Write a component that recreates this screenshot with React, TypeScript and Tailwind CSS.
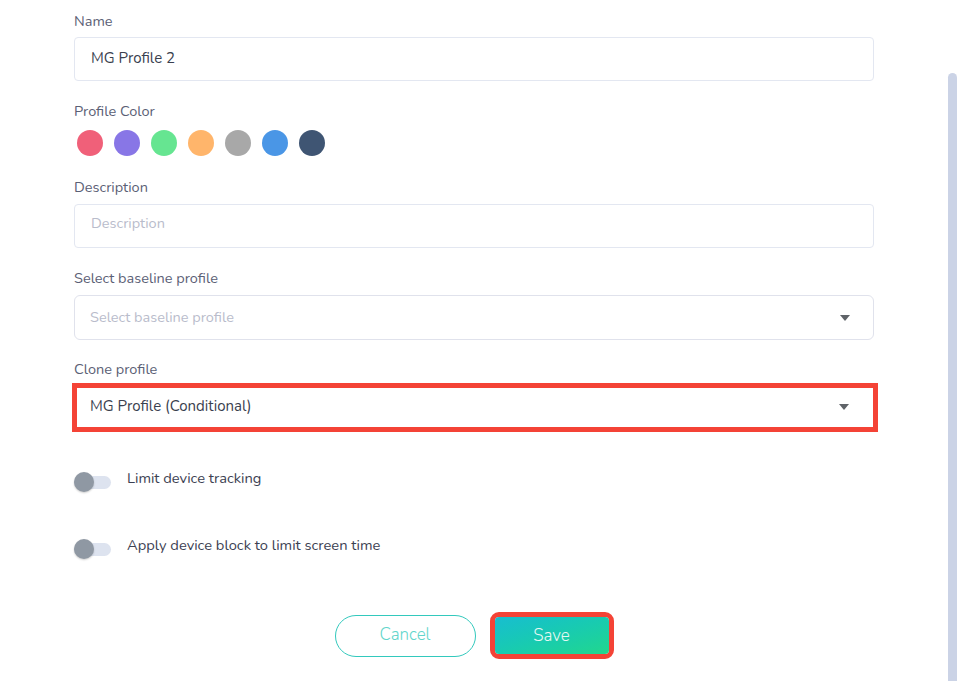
const colors = ["#f06079", "#8876e6", "#66e591", "#ffb56b", "#a8a8a8", "#4a96e6", "#3f5573"];

function Caret() {
  return (
    <svg width="10" height="6" viewBox="0 0 10 6" aria-hidden="true">
      <path d="M0 0h10L5 6z" fill="#5f6368" />
    </svg>
  );
}

function Toggle({ label }: { label: string }) {
  return (
    <div className="flex h-[20px] items-center">
      <div className="relative h-[20px] w-[37px] shrink-0">
        <div className="absolute left-0 top-[4px] h-[13px] w-[37px] rounded-full bg-[#dde3ef]" />
        <div className="absolute left-0 top-0 h-[20px] w-[20px] rounded-full bg-[#8f98a3] shadow-[0_1px_2px_rgba(0,0,0,0.2)]" />
      </div>
      <span className="-mt-[8px] ml-[16px] text-[14.7px] text-[#3c4152]">{label}</span>
    </div>
  );
}

export default function App() {
  return (
    <div
      className="flex h-[681px] w-[957px] overflow-hidden bg-white"
      style={{ fontFamily: "Nunito, Lato, 'Noto Sans', sans-serif" }}
    >
      <div className="flex-1 pl-[74px] pr-[74px] pt-[11px]">
        <div className="w-[800px]">
          {/* Name */}
          <div className="h-[20px] text-[14.5px] leading-[20px] text-[#5b6075]">Name</div>
          <div className="mt-[6px] flex h-[44px] items-center rounded-[4px] border border-[#e3e7f1] px-[16px] pb-[1px] text-[15px] text-[#3a3f4f]">
            MG Profile 2
          </div>

          {/* Profile color */}
          <div className="mt-[20px] h-[20px] text-[14.5px] leading-[20px] text-[#5b6075]">Profile Color</div>
          <div className="mt-[9px] flex gap-[11px] pl-[3px]">
            {colors.map((c) => (
              <div key={c} className="h-[26px] w-[26px] rounded-full" style={{ backgroundColor: c }} />
            ))}
          </div>

          {/* Description */}
          <div className="mt-[21px] h-[20px] text-[14.5px] leading-[20px] text-[#5b6075]">Description</div>
          <div className="mt-[7px] flex h-[44px] items-center rounded-[4px] border border-[#e3e7f1] px-[16px] pb-[5px] text-[14.5px] text-[#b9bccb]">
            Description
          </div>

          {/* Baseline */}
          <div className="mt-[20px] h-[20px] text-[14.5px] leading-[20px] text-[#5b6075]">Select baseline profile</div>
          <div className="mt-[7px] flex h-[45px] items-center justify-between rounded-[6px] border border-[#e0e2ec] pl-[15px] pr-[23px] text-[14.5px] text-[#b9bccb]">
            <span>Select baseline profile</span>
            <Caret />
          </div>

          {/* Clone */}
          <div className="mt-[19px] h-[20px] text-[14.5px] leading-[20px] text-[#5b6075]">Clone profile</div>
          <div className="-ml-[2px] mt-[4px] flex h-[49px] w-[806px] items-center justify-between border-[5px] border-[#f44336] pb-[2px] pl-[13px] pr-[24px] text-[15px] text-[#3a3f4f]">
            <span>MG Profile (Conditional)</span>
            <Caret />
          </div>

          {/* Toggles */}
          <div className="mt-[40px]">
            <Toggle label="Limit device tracking" />
          </div>
          <div className="mt-[47px]">
            <Toggle label="Apply device block to limit screen time" />
          </div>

          {/* Buttons */}
          <div className="mt-[53px] flex items-center justify-center gap-[14px]">
            <button className="mt-[1px] h-[42px] w-[141px] rounded-full border border-[#33c9bd] pb-[2px] text-[17px] font-light text-[#62d5cb]">
              Cancel
            </button>
            <div className="rounded-[9px] border-[5px] border-[#f44336] p-0">
              <button className="block h-[37px] w-[114px] rounded-[4px] bg-gradient-to-br from-[#19bdd0] to-[#22d78c] text-[17px] font-light text-[#e6f8f3]">
                Save
              </button>
            </div>
          </div>
        </div>
      </div>

      {/* scrollbar */}
      <div className="w-[9px] shrink-0 pt-[73px]">
        <div className="h-full rounded-t-[5px] bg-[#cbd3e6]" />
      </div>
    </div>
  );
}
